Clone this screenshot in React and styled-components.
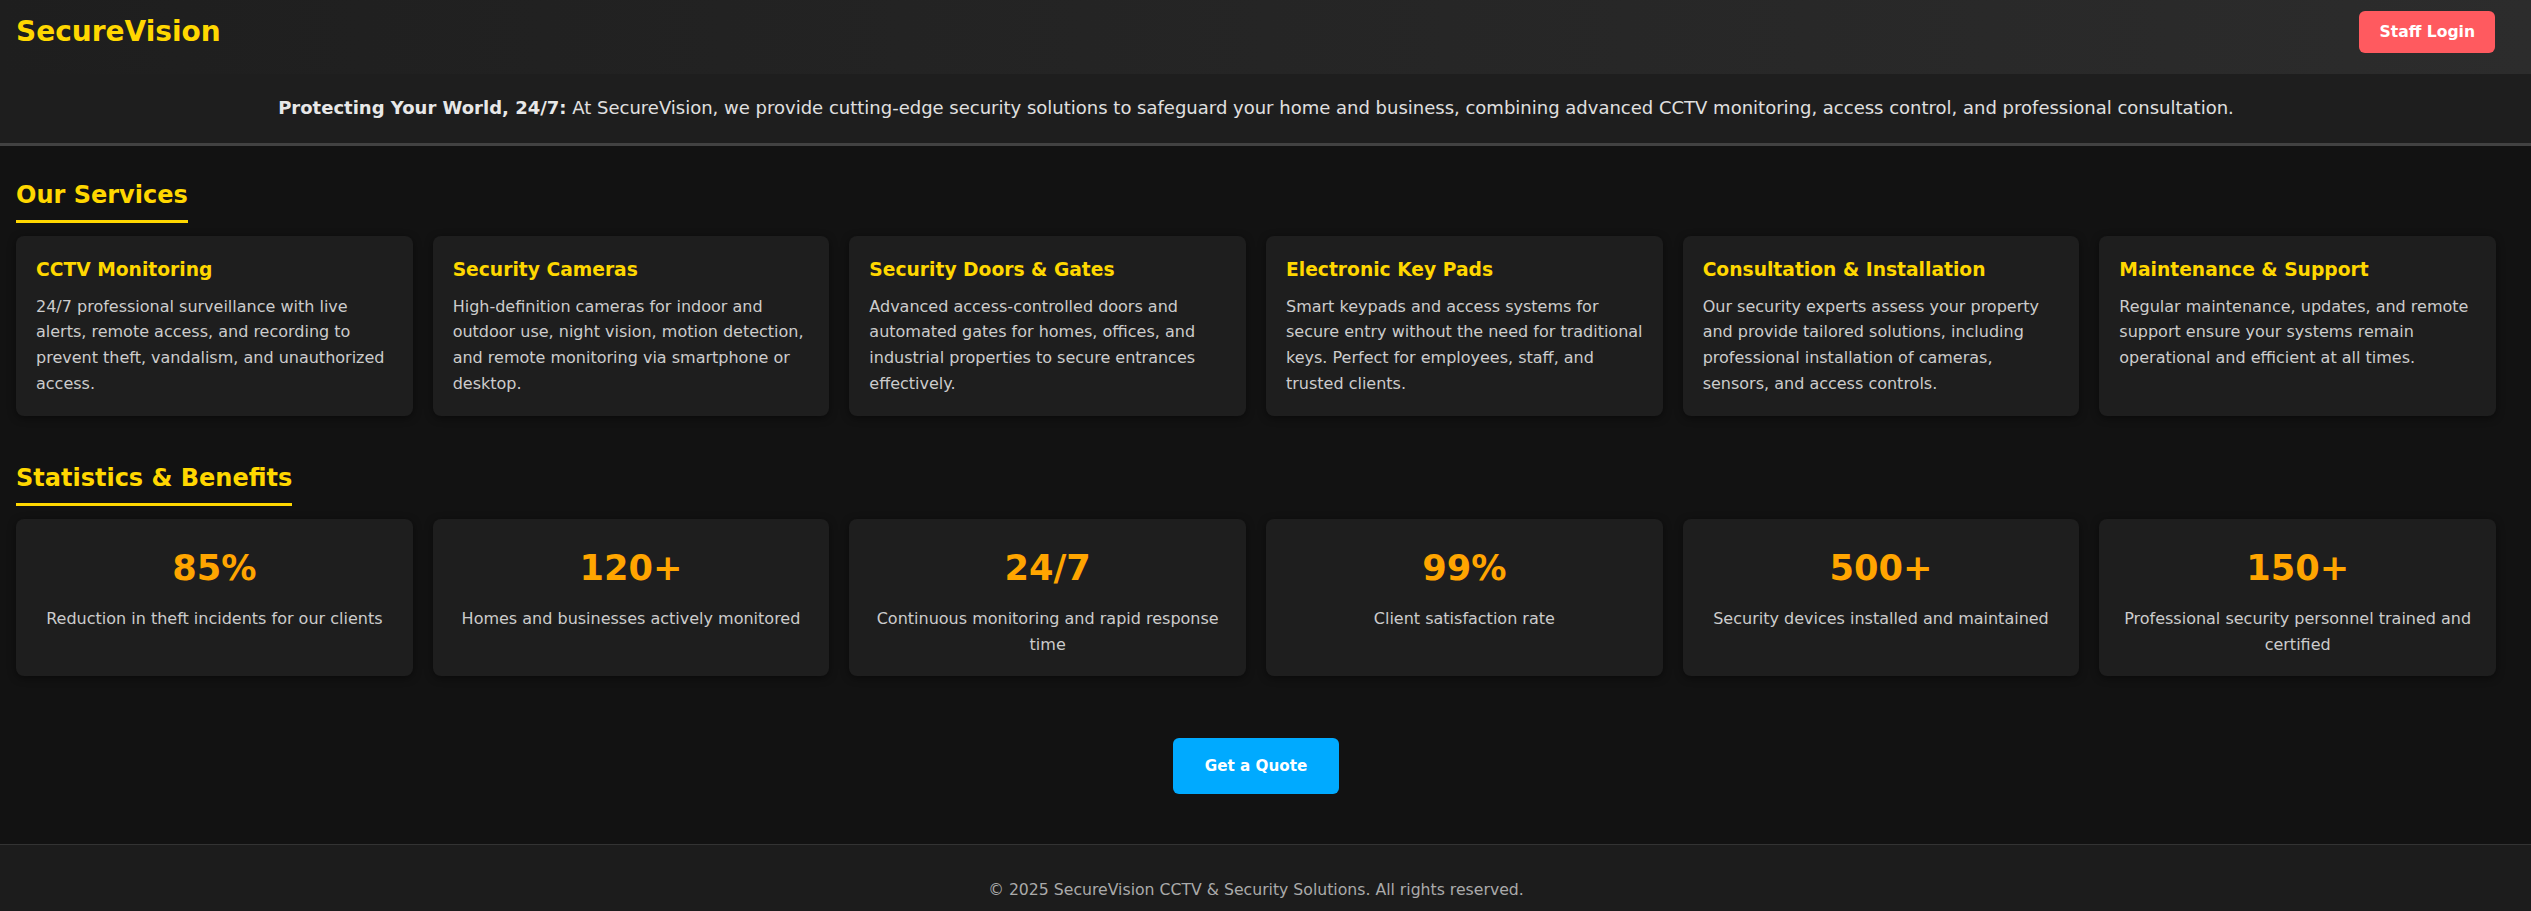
import React from "react";
import styled, { createGlobalStyle } from "styled-components";

const GlobalStyle = createGlobalStyle`
  * { box-sizing: border-box; }
  html, body { margin: 0; padding: 0; background: #121212; }
  body {
    font-family: "DejaVu Sans", "Liberation Sans", sans-serif;
    color: #e0e0e0;
  }
`;

const Header = styled.header`
  display: flex;
  align-items: center;
  justify-content: space-between;
  padding: 11px 36px 21px 16px;
  background: linear-gradient(90deg, #1e1e1e 0%, #2c2c2c 100%);
`;

const Logo = styled.div`
  font-size: 28px;
  font-weight: 700;
  color: #ffd700;
  line-height: 1.16;
`;

const LoginButton = styled.button`
  font-family: inherit;
  font-size: 15.6px;
  font-weight: 700;
  color: #ffffff;
  background: #ff5a5f;
  border: none;
  border-radius: 6px;
  padding: 12px 20px;
  line-height: 1.16;
  cursor: pointer;
`;

const Tagline = styled.div`
  background: #1e1e1e;
  border-bottom: 3px solid #424242;
  padding: 20px 35px 20px 16px;
  text-align: center;
  font-size: 18px;
  line-height: 1.6;
  color: #e0e0e0;

  strong { font-weight: 700; color: #e8e8e8; }
`;

const Main = styled.main`
  padding: 35px 35px 50px 16px;
`;

const Section = styled.section`
  margin-bottom: 48px;
`;

const SectionTitle = styled.h2`
  display: inline-block;
  margin: 0 0 13px;
  font-size: 24px;
  font-weight: 700;
  line-height: 1.2;
  color: #ffd700;
  padding-bottom: 10px;
  border-bottom: 3px solid #ffd700;
`;

const Grid = styled.div`
  display: grid;
  grid-template-columns: repeat(6, 1fr);
  gap: 20px;
`;

const Card = styled.div`
  background: #1e1e1e;
  border-radius: 8px;
  box-shadow: 0 2px 8px rgba(0, 0, 0, 0.45);
  padding: ${(p) => (p.$center ? "24px 20px 19px" : "20px")};
  text-align: ${(p) => (p.$center ? "center" : "left")};
`;

const CardTitle = styled.h3`
  margin: 1px 0 11px;
  font-size: 18.7px;
  font-weight: 700;
  line-height: 1.4;
  color: #ffd700;
`;

const CardText = styled.p`
  margin: 0;
  font-size: 16px;
  line-height: 1.6;
  color: #cccccc;
`;

const StatNumber = styled.div`
  font-size: 35.2px;
  font-weight: 700;
  line-height: 1.4;
  color: #ffa500;
  margin-bottom: 14px;
`;

const CtaRow = styled.div`
  display: flex;
  justify-content: center;
  padding-top: 14px;
`;

const QuoteButton = styled.button`
  font-family: inherit;
  font-size: 15.2px;
  font-weight: 700;
  line-height: 1.16;
  color: #ffffff;
  background: #00aaff;
  border: none;
  border-radius: 6px;
  padding: 19.2px 32px;
  cursor: pointer;
`;

const Footer = styled.footer`
  background: #1c1c1c;
  border-top: 1px solid #333333;
  padding: 32px 35px 32px 16px;
  text-align: center;
  font-size: 15.7px;
  line-height: 1.6;
  color: #aaaaaa;
`;

const services = [
  {
    title: "CCTV Monitoring",
    text: "24/7 professional surveillance with live alerts, remote access, and recording to prevent theft, vandalism, and unauthorized access.",
  },
  {
    title: "Security Cameras",
    text: "High-definition cameras for indoor and outdoor use, night vision, motion detection, and remote monitoring via smartphone or desktop.",
  },
  {
    title: "Security Doors & Gates",
    text: "Advanced access-controlled doors and automated gates for homes, offices, and industrial properties to secure entrances effectively.",
  },
  {
    title: "Electronic Key Pads",
    text: "Smart keypads and access systems for secure entry without the need for traditional keys. Perfect for employees, staff, and trusted clients.",
  },
  {
    title: "Consultation & Installation",
    text: "Our security experts assess your property and provide tailored solutions, including professional installation of cameras, sensors, and access controls.",
  },
  {
    title: "Maintenance & Support",
    text: "Regular maintenance, updates, and remote support ensure your systems remain operational and efficient at all times.",
  },
];

const stats = [
  { value: "85%", label: "Reduction in theft incidents for our clients" },
  { value: "120+", label: "Homes and businesses actively monitored" },
  { value: "24/7", label: "Continuous monitoring and rapid response time" },
  { value: "99%", label: "Client satisfaction rate" },
  { value: "500+", label: "Security devices installed and maintained" },
  { value: "150+", label: "Professional security personnel trained and certified" },
];

export default function App() {
  return (
    <>
      <GlobalStyle />
      <Header>
        <Logo>SecureVision</Logo>
        <LoginButton>Staff Login</LoginButton>
      </Header>
      <Tagline>
        <strong>Protecting Your World, 24/7:</strong> At SecureVision, we provide
        cutting-edge security solutions to safeguard your home and business,
        combining advanced CCTV monitoring, access control, and professional
        consultation.
      </Tagline>
      <Main>
        <Section>
          <SectionTitle>Our Services</SectionTitle>
          <Grid>
            {services.map((s) => (
              <Card key={s.title}>
                <CardTitle>{s.title}</CardTitle>
                <CardText>{s.text}</CardText>
              </Card>
            ))}
          </Grid>
        </Section>
        <Section>
          <SectionTitle>Statistics &amp; Benefits</SectionTitle>
          <Grid>
            {stats.map((s) => (
              <Card key={s.value} $center>
                <StatNumber>{s.value}</StatNumber>
                <CardText>{s.label}</CardText>
              </Card>
            ))}
          </Grid>
        </Section>
        <CtaRow>
          <QuoteButton>Get a Quote</QuoteButton>
        </CtaRow>
      </Main>
      <Footer>© 2025 SecureVision CCTV &amp; Security Solutions. All rights reserved.</Footer>
    </>
  );
}
